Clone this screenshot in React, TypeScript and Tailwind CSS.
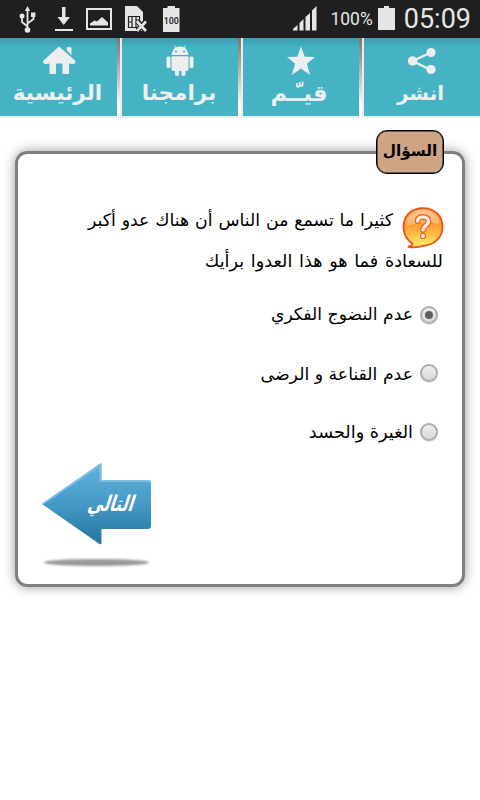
import { useState } from 'react';

const options = [
  { id: 'a', label: 'عدم النضوج الفكري', text: 'text-[17.2px]' },
  { id: 'b', label: 'عدم القناعة و الرضى', text: 'text-[17.3px] pt-[2px]' },
  { id: 'c', label: 'الغيرة والحسد', text: 'text-[17.7px]' },
];

const StatusBar = () => (
  <div className="h-[38px] bg-[#1f1f1f] text-[#e6e6e6] flex items-center justify-between font-['Roboto',sans-serif]">
    <svg width="190" height="38" viewBox="0 0 190 38" fill="#e6e6e6">
      {/* usb */}
      <g stroke="#e6e6e6" fill="none" strokeWidth="1.8">
        <path d="M27.500 10v20M27.500 26.500l-5.500-4.500v-6M27.500 23.500l6-4.500v-4" />
      </g>
      <path d="M27.500 6l2.700 5h-5.400zM31 12.500h4.400v4.400h-4.400z" />
      <circle cx="22" cy="16" r="2.500" />
      <circle cx="27.500" cy="30" r="2.800" />
      {/* download */}
      <path d="M62 7h3.500v10h4.500l-6.300 8-6.200-8h4.500zM55 29h18v2h-18z" />
      {/* picture */}
      <path d="M86 8h26v22h-26zM88 10v18h22v-18z" fillRule="evenodd" />
      <path d="M90 25.500v-2l4.500-3 2.500 1 5-4.500 6 5.500v3z" />
      {/* sim */}
      <path d="M125 6h12l6 6v19h-18z" />
      <g stroke="#1f1f1f" fill="none" strokeWidth="1.200">
        <path d="M128.500 16.500h11v11h-11zM132 16.500v11M136 16.500v11M128.500 22h3.500M136 20h3" />
      </g>
      <path d="M137.500 21.500l8 9M145.500 21.500l-8 9" stroke="#1f1f1f" strokeWidth="5" />
      <path d="M137 21.500l9 9.500M146 21.500l-9 9.500" stroke="#e6e6e6" strokeWidth="2.600" />
      {/* battery level */}
      <path d="M167.500 6h7.500v2h4.500v24h-16.500v-24h4.500z" />
      <text x="171.300" y="24" textAnchor="middle" fontSize="8.800" fontWeight="600" fill="#1f1f1f">100</text>
    </svg>
    <div className="flex items-center pr-[9px]">
      <svg width="26" height="26" viewBox="0 0 26 26" fill="#e6e6e6">
        <path d="M2 24.500v-1.500l4.500-4v5.500zM8.500 24.500v-7.500l4-4v11.500zM14.500 24.500v-13.500l4.500-4v17.500zM21 24.500v-20l4.500-4.500v24.500z" />
      </svg>
      <span className="ml-[13px] text-[17.5px]">100%</span>
      <svg className="ml-[5px] -mt-[2px]" width="17" height="24" viewBox="0 0 17 24" fill="#e6e6e6">
        <path d="M6 0h5v2h6v22h-17v-22h6z" />
      </svg>
      <span className="ml-[9px] text-[27px]">05:09</span>
    </div>
  </div>
);

const HomeIcon = () => (
  <svg width="34" height="32" viewBox="0 0 34 32" fill="#eee">
    <path d="M17 1.500L1.500 15.500q-1.500 3.500 2 3.500l4-.5v10.500h6.500v-9.500q0-1 1-1h4.500q1 0 1 1v9.500h6.500v-10.500l4 .5q3.500 0 2-3.500z" />
    <path d="M24.500 2.500q2.500-1 5 0v7.500l-4.500-4.500z" />
  </svg>
);

const AndroidIcon = () => (
  <svg width="34" height="32" viewBox="0 0 34 32" fill="#eee">
    <path d="M13 3l-1.500-2.500M21 3l1.500-2.500" stroke="#eee" fill="none" />
    <path d="M8.500 10q1-8.500 8.500-8.500t8.500 8.500zM8.500 11.200h17v12.800q0 2-2 2h-1v4q-2 2-4 0v-4h-2.500v4q-2 2-4 0v-4h-1.500q-2 0-2-2z" />
    <rect x="3.500" y="11.500" width="4" height="11.500" rx="1.500" />
    <rect x="26.500" y="11.500" width="4" height="11.500" rx="1.500" />
    <circle cx="13" cy="6.500" r="1.100" fill="#45b3c4" />
    <circle cx="21" cy="6.500" r="1.100" fill="#45b3c4" />
  </svg>
);

const StarIcon = () => (
  <svg width="34" height="32" viewBox="0 0 34 32" fill="#eee">
    <path d="M17 1.500l3.800 10.300 10.200.3-8.100 6.600 3.300 11.200-9.200-6.300-9.200 6.300 3.300-11.200-8.100-6.600 10.200-.3z" />
  </svg>
);

const ShareIcon = () => (
  <svg width="34" height="32" viewBox="0 0 34 32" fill="#eee">
    <path d="M26 7.500l-18.500 8.500 18.500 9" stroke="#eee" strokeWidth="2.400" fill="none" />
    <circle cx="26" cy="7.500" r="4.600" />
    <circle cx="7.500" cy="16" r="4.700" />
    <circle cx="26" cy="24.500" r="4.600" />
  </svg>
);

const tabs = [
  { label: 'الرئيسية', icon: <HomeIcon />, text: 'text-[21.5px] pr-[2px]' },
  { label: 'برامجنا', icon: <AndroidIcon />, text: 'text-[21.5px] pr-[2px]' },
  { label: 'قيـّـم', icon: <StarIcon />, text: 'text-[22.5px] pr-[4px]' },
  { label: 'انشر', icon: <ShareIcon />, text: 'text-[20px] pr-[3px]' },
];

const NavBar = () => (
  <nav className="flex gap-[3px] h-[80px] bg-linear-to-b from-[#7b7473] to-white to-85%">
    {tabs.map((tab, i) => (
      <button
        key={tab.label}
        className={`border-b-2 border-[#ececec] bg-linear-to-b from-[#3a9dac] via-[#45b3c4] via-12% to-[#45b3c4] text-[#eee] flex flex-col items-center shrink-0 ${i > 0 ? 'border-l-2 w-[118px]' : 'w-[117px]'}`}
      >
        <span className="mt-[7px] h-[32px]">{tab.icon}</span>
        <span dir="rtl" className={`${tab.text} font-bold leading-[32px] whitespace-nowrap`}>{tab.label}</span>
      </button>
    ))}
  </nav>
);

const QuestionIcon = () => (
  <svg className="w-[42px] h-[42px]" viewBox="0 0 42 42">
    <defs>
      <linearGradient id="bubble" x1="0" y1="0" x2="0" y2="1">
        <stop offset="0" stopColor="#ffb777" />
        <stop offset=".45" stopColor="#ff9d33" />
        <stop offset="1" stopColor="#fff06e" />
      </linearGradient>
    </defs>
    <path d="M21 1.200c12 0 19.500 8 19.500 18.500s-8 18.500-19 19c-4 1.500-10 2-15.500 1 3-.7 4.500-1.500 4.500-3C4.500 32.500 1.500 27 1.500 20 1.500 9 9 1.200 21 1.200z" fill="url(#bubble)" stroke="#f0561a" strokeWidth="1.900" />
    <path d="M4 19C5 8 13 3.500 21 3.500s16 5 17 13c-11-2-22-1-34 2.500z" fill="#fff" opacity=".25" />
    <path d="M15.500 14q.5-4 5.500-4t5.500 4.500c0 4-5.500 4-5.500 8.500" fill="none" stroke="#e8682c" strokeWidth="5.800" strokeLinecap="round" />
    <path d="M15.500 14q.5-4 5.500-4t5.500 4.500c0 4-5.500 4-5.500 8.500" fill="none" stroke="#fff3df" strokeWidth="3.200" strokeLinecap="round" />
    <circle cx="21" cy="29" r="2.500" fill="#fff3df" stroke="#e8682c" strokeWidth="1.200" />
  </svg>
);

const NextButton = () => (
  <button className="block">
    <svg width="112" height="110" viewBox="0 0 112 110">
      <defs>
        <linearGradient id="arrow" x1="0" y1="0" x2="0" y2="1">
          <stop offset="0" stopColor="#62b3df" />
          <stop offset=".5" stopColor="#4599c5" />
          <stop offset="1" stopColor="#26749b" />
        </linearGradient>
        <filter id="soft" x="-20%" y="-50%" width="140%" height="200%">
          <feGaussianBlur stdDeviation="1" />
        </filter>
      </defs>
      <path d="M0 42L57.500 2q2-1 2 1V18H106q3 0 3 3v43q0 3-3 3H59.500v14q0 2-2 1z" fill="url(#arrow)" />
      <path d="M1.500 41.500L58.500 2.500v16.500h47.500q2.500 0 2.500 2" fill="none" stroke="#7cc0e2" strokeWidth="1.800" />
      <ellipse cx="54.500" cy="100.500" rx="52.500" ry="3.600" fill="#999" filter="url(#soft)" />
      <text x="0" y="0" textAnchor="middle" direction="rtl" fontSize="17" fontWeight="700" fill="#fff" transform="translate(67.500 48.500) skewX(-18) scale(.93 1.270)" className="font-['DejaVu_Sans',sans-serif]">التالي</text>
    </svg>
  </button>
);

export default function App() {
  const [selected, setSelected] = useState('a');

  return (
    <div className="w-[480px] h-[800px] bg-white text-black overflow-hidden font-['DejaVu_Sans',sans-serif]">
      <StatusBar />
      <NavBar />
      <main dir="rtl" className="mt-[33px] mx-[15px] h-[436px] border-3 border-[#808080] rounded-[12px] shadow-[0_0_12px_rgba(0,0,0,0.4)] px-[19px] flex flex-col">
        <h1 className="-mt-[24px] -mr-[1px] w-[68px] h-[44px] border border-black ring-[0.5px] ring-inset ring-black rounded-[11px] bg-[#cda584] text-[15.3px] font-bold flex items-center justify-center shrink-0 pb-px">السؤال</h1>
        <div className="mt-[25px] text-[17.3px] leading-[42px] h-[84px] shrink-0 whitespace-nowrap">
          <div className="flex items-start h-[41px]">
            <div className="mt-[8px] -mr-[1px] ml-[9px] w-[42px] h-[34px]"><QuestionIcon /></div>
            <p className="[word-spacing:0.4px]">كثيرا ما تسمع من الناس أن هناك عدو أكبر</p>
          </div>
          <p className="text-[17.7px] [word-spacing:1px]">للسعادة فما هو هذا العدوا برأيك</p>
        </div>
        <div className="mt-[3px] pr-[5px]">
          {options.map((o) => (
            <button key={o.id} onClick={() => setSelected(o.id)} className="flex items-center h-[58.5px] whitespace-nowrap">
              <span className="-mt-px w-[18px] h-[18px] rounded-full border-2 border-[#adadad] bg-linear-to-b from-[#eee] to-[#d8d8d8] shadow-[0_1px_1px_#ddd] flex items-center justify-center">
                {selected === o.id && <span className="w-[8px] h-[8px] rounded-full bg-[#606060]" />}
              </span>
              <span className={`mr-[7px] ${o.text}`}>{o.label}</span>
            </button>
          ))}
        </div>
        <div className="flex justify-end pl-[5px]">
          <NextButton />
        </div>
      </main>
    </div>
  );
}
